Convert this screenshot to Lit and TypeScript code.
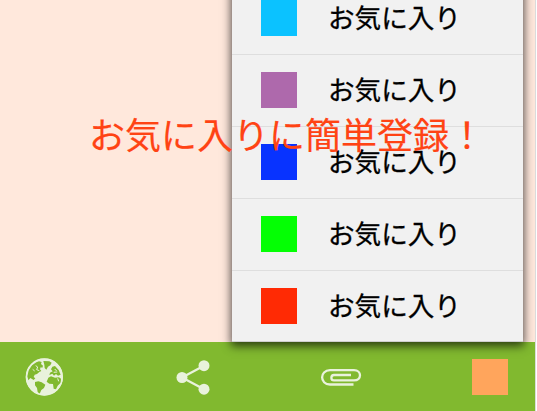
import { LitElement, html, css } from "lit";
import { customElement } from "lit/decorators.js";
import { styleMap } from "lit/directives/style-map.js";

@customElement("favorites-menu")
class FavoritesMenu extends LitElement {
  static styles = css`
    :host {
      display: block;
      background: #f1f1f1;
      box-shadow: inset 0 -1px 0 #cfcfcf, 0 3px 9px 1px rgba(0, 0, 0, 0.68);
    }
    .row {
      display: flex;
      align-items: center;
      box-sizing: border-box;
      height: 72px;
      padding: 0 0 1px 29px;
      gap: 31px;
      border-top: 1px solid #dedede;
    }
    .swatch {
      width: 36px;
      height: 36px;
    }
    .label {
      padding-bottom: 2px;
      font-size: 26.6px;
      line-height: 32px;
      color: #000;
      -webkit-text-stroke: 0.3px #000;
      white-space: nowrap;
    }
  `;

  private colors = ["#0bc2ff", "#ae69ac", "#0833ff", "#04ff04", "#ff2a04"];

  render() {
    return this.colors.map(
      (c) => html`<div class="row">
        <div class="swatch" style=${styleMap({ background: c })}></div>
        <div class="label">お気に入り</div>
      </div>`
    );
  }
}

@customElement("app-root")
class AppRoot extends LitElement {
  static styles = css`
    :host {
      display: block;
      position: relative;
      width: 537px;
      height: 411px;
      overflow: hidden;
      background: #fff;
      font-family: "Noto Sans CJK JP", sans-serif;
    }
    .screen {
      display: flex;
      flex-direction: column;
      box-sizing: border-box;
      width: 536px;
      height: 411px;
      border-right: 1px solid #dcdcdc;
      background: #ffe8dc;
    }
    .page {
      flex: 1;
    }
    .bar {
      display: flex;
      align-items: center;
      justify-content: space-between;
      box-sizing: border-box;
      height: 69px;
      padding: 1px 27px 0 25px;
      background: #81b92f;
    }
    .bar svg {
      display: block;
      overflow: visible;
    }
    .current {
      width: 36px;
      height: 36px;
      background: #ffa55c;
    }
    favorites-menu {
      position: absolute;
      left: 232px;
      width: 291px;
      bottom: 69px;
    }
    .headline {
      position: absolute;
      left: 89px;
      top: 107px;
      font-size: 36px;
      line-height: 52px;
      color: #ff4314;
      -webkit-text-stroke: 0.2px #ff4314;
      white-space: nowrap;
    }
  `;

  render() {
    return html`
      <div class="screen">
        <div class="page"></div>
        <div class="bar">
          <svg width="39" height="38" viewBox="30 25 117 114">
            <circle cx="88" cy="82" r="55.5" fill="#e9f2dc" />
            <g fill="#81b92f">
              <path d="M85 34L103 35L110 39L106 47L99 51L94 60L89 55L88 45Z" />
              <path d="M64 38L72 35L80 37L78 43L84 48L82 54L77 53L75 59L79 64L73 67L66 73L59 75L56 82L61 86L56 91L46 85L40 92L37 80L41 62L51 47Z" />
              <path d="M60 97L70 95L80 98L91 105L87 115L79 121L74 132L68 127L66 115L60 107Z" />
              <path d="M100 84L108 80L120 84L132 83L138 87L137 99L128 108L123 119L116 117L114 103L103 102L95 96Z" />
              <path d="M103 76L105 69L113 65L108 59L112 51L120 49L131 61L137 75L129 78L123 73L117 78L112 72Z" />
            </g>
            <g fill="none" stroke="#e9f2dc" stroke-width="3">
              <path d="M62 48L68 52L65 60L73 63M53 59L59 64M119 58L125 64M116 68L127 67M128 86L131 95" />
              <circle cx="88" cy="82" r="54" stroke-width="4" />
            </g>
          </svg>
          <svg width="36" height="36" viewBox="0 0 36 36" fill="#e9f2dc">
            <path d="M29 6.7L7 18.5L29 30.2" fill="none" stroke="#e9f2dc" stroke-width="2.3" />
            <circle cx="29" cy="6.7" r="5.5" />
            <circle cx="7" cy="18.5" r="5.5" />
            <circle cx="29" cy="30.2" r="5.5" />
          </svg>
          <svg width="40" height="18" viewBox="0 0 40 18" fill="none" stroke="#e9f2dc" stroke-width="2.3">
            <path d="M32.5 16.5H9C-1.5 16.5-1.5 2.2 9 2.2H33C41 2.2 41 12.4 33 12.4H13C9.5 12.4 9.5 7 13 7H30" />
          </svg>
          <div class="current"></div>
        </div>
      </div>
      <favorites-menu></favorites-menu>
      <div class="headline">お気に入りに簡単登録！</div>
    `;
  }
}
